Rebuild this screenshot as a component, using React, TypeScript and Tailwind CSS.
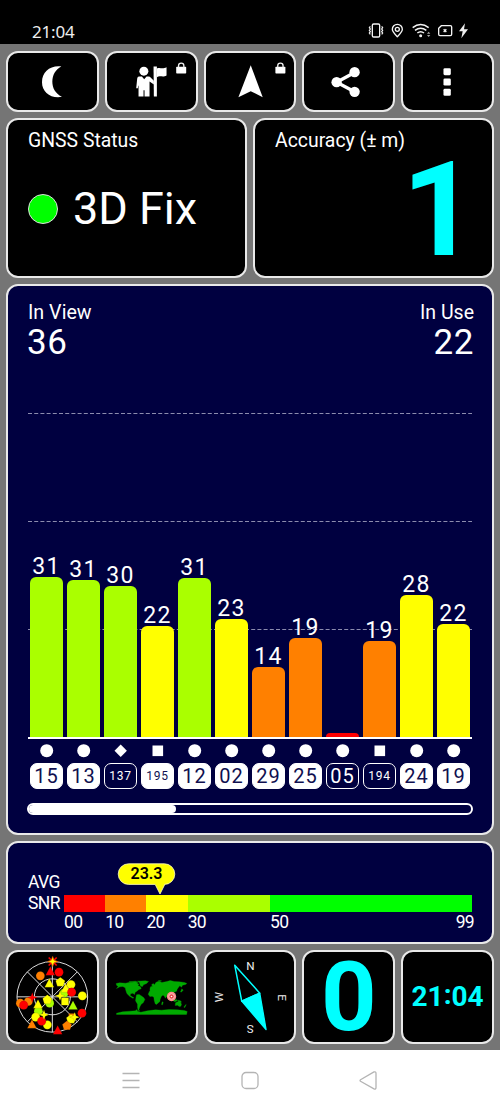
import type { ReactNode } from 'react';
import clsx from 'clsx';

type Sat = {
  id: string;
  snr?: number;
  h: number;
  color: string;
  shape: 'circle' | 'square' | 'diamond';
  used: boolean;
};

const LIME = 'bg-[#aaff00]';
const YELLOW = 'bg-[#ffff00]';
const ORANGE = 'bg-[#ff8000]';
const RED = 'bg-[#ff0000]';

const sats: Sat[] = [
  { id: '15', snr: 31, h: 160, color: LIME, shape: 'circle', used: true },
  { id: '13', snr: 31, h: 157, color: LIME, shape: 'circle', used: true },
  { id: '137', snr: 30, h: 151.5, color: LIME, shape: 'diamond', used: false },
  { id: '195', snr: 22, h: 111, color: YELLOW, shape: 'square', used: true },
  { id: '12', snr: 31, h: 159.5, color: LIME, shape: 'circle', used: true },
  { id: '02', snr: 23, h: 118.5, color: YELLOW, shape: 'circle', used: true },
  { id: '29', snr: 14, h: 70.5, color: ORANGE, shape: 'circle', used: true },
  { id: '25', snr: 19, h: 99, color: ORANGE, shape: 'circle', used: true },
  { id: '05', h: 4.5, color: RED, shape: 'circle', used: false },
  { id: '194', snr: 19, h: 96, color: ORANGE, shape: 'square', used: false },
  { id: '24', snr: 28, h: 142.5, color: YELLOW, shape: 'circle', used: true },
  { id: '19', snr: 22, h: 113, color: YELLOW, shape: 'circle', used: true },
];

const snrScale = [
  { label: '00', span: 10, color: RED },
  { label: '10', span: 10, color: ORANGE },
  { label: '20', span: 10, color: YELLOW },
  { label: '30', span: 20, color: LIME },
  { label: '50', span: 49, color: 'bg-[#00ff00]' },
];

function Card({ className, children }: { className?: string; children?: ReactNode }) {
  return (
    <div className={clsx('rounded-[12px] border-2 border-[#e9e9e9]', className)}>
      {children}
    </div>
  );
}

function Lock({ x }: { x: number }) {
  return (
    <g transform={`translate(${x} 186)`}>
      <rect x="0" y="13" width="30" height="20" rx="2" fill="#fff" />
      <path d="M7 14V10a8 8 0 0 1 16 0v5" fill="none" stroke="#eee" strokeWidth="4" />
    </g>
  );
}

function StatusBar() {
  return (
    <div className="h-11 bg-black flex items-start justify-between pl-8 pr-[31px]">
      <span className="mt-[20px] text-[17px] leading-6 text-[#eee] font-['Noto_Sans',sans-serif] tracking-[-0.2px]">21:04</span>
      <svg className="mt-[22px] w-[101px] h-[16.7px]" viewBox="354 66 303 50" fill="none" stroke="#f4f4f4" strokeWidth="4">
        <rect x="367" y="72" width="22" height="39" rx="4" />
        <path d="M361 79l-3 4 3 4-3 4 3 4-3 4 3 4M395 79l3 4-3 4 3 4-3 4 3 4-3 4" strokeWidth="3.5" />
        <path d="M442 110c-7-7-15-14-15-22a15 15 0 0 1 30 0c0 8-8 15-15 22z" />
        <circle cx="442" cy="88" r="6" />
        <path d="M488 83q24-19 48 0M495 91q17-13 34 0M502 99q10-8 20 0" strokeWidth="4.5" />
        <circle cx="512" cy="107" r="4.5" fill="#eee" stroke="none" />
        <path d="M531 101l5-6 5 6zM531 105l5 6 5-6z" fill="#aaa" stroke="none" />
        <path d="M574 77h27q4 0 4 4v22q0 4-4 4h-31q-4 0-4-4V85z" />
        <path d="M581 88l8 8M589 88l-8 8" strokeWidth="4" />
        <path d="M645 70l-18 24h11l-4 21 20-27h-12z" fill="#eee" stroke="none" />
      </svg>
    </div>
  );
}

function TopButtons() {
  return (
    <div className="grid grid-cols-5 gap-1.5 h-[61px] shrink-0">
      <Card className="bg-black">
        <svg className="w-full h-full" viewBox="24 157.5 266.4 171" fill="#fff">
          <path d="M184 198C150 194 126 215 126 245s26 50 60 44C165 278 157 262 157 243s9-35 27-45z" />
        </svg>
      </Card>
      <Card className="bg-black">
        <svg className="w-full h-full" viewBox="320.4 157.5 266.4 171" fill="#fff">
          <circle cx="431" cy="212" r="13.5" />
          <path d="M416 228h9l7 8 7-8h6q4 0 7 4l9 9v11l-13-9v45h-15v-19h-3v19h-15v-30l-1-4-1 9h-5l3-29q1-6 5-6z" />
          <path d="M460 198h10v90h-9z" />
          <path d="M470 204c9-5 16 3 29-4v25c-12 7-20-2-29 5z" />
          <Lock x={528} />
        </svg>
      </Card>
      <Card className="bg-black">
        <svg className="w-full h-full" viewBox="-133.2 157.5 266.4 171" fill="#fff">
          <path d="M1 194L37 290L1 272L-36 290z" />
          <Lock x={75} />
        </svg>
      </Card>
      <Card className="bg-black">
        <svg className="w-full h-full" viewBox="163.2 157.5 266.4 171" fill="#fff">
          <path d="M315 216L261 245L315 274" fill="none" stroke="#fff" strokeWidth="10" />
          <circle cx="315" cy="215" r="15.5" />
          <circle cx="261" cy="245" r="15.5" />
          <circle cx="315" cy="274" r="15.5" />
        </svg>
      </Card>
      <Card className="bg-black">
        <svg className="w-full h-full" viewBox="459.6 157.5 266.4 171" fill="#fff">
          <rect x="581" y="203" width="22" height="21" rx="4" />
          <rect x="581" y="234" width="22" height="21" rx="4" />
          <rect x="581" y="265" width="22" height="21" rx="4" />
        </svg>
      </Card>
    </div>
  );
}

function SatMark({ shape }: { shape: Sat['shape'] }) {
  return (
    <svg className="w-[14px] h-[14px]" viewBox="0 0 14 14" fill="#fff">
      {shape === 'circle' && <circle cx="6.7" cy="6.7" r="6.5" />}
      {shape === 'square' && <rect x="1.5" y="1.5" width="10.6" height="10.6" />}
      {shape === 'diamond' && <path d="M6.7 .5L12.9 6.7L6.7 12.9L.5 6.7z" />}
    </svg>
  );
}

function SignalCard() {
  return (
    <Card className="bg-[#000040] h-[551px] shrink-0 px-5 pt-[15px]">
      <div className="flex justify-between">
        <div>
          <div className="text-[19.7px] leading-6">In View</div>
          <div className="text-[35px] leading-9 tracking-[0.6px] -ml-px">36</div>
        </div>
        <div className="text-right">
          <div className="text-[19.5px] leading-6 -mr-0.5">In Use</div>
          <div className="text-[35px] leading-9 tracking-[0.6px] -mr-0.5">22</div>
        </div>
      </div>

      <div className="relative mt-4 h-[362px]">
        <svg className="absolute left-0 top-0 w-full h-full" stroke="#8c8cae" strokeWidth="1.2" strokeDasharray="4 2.2">
          <path d="M0 36.5H444M0 144.5H444M0 252.5H444" />
        </svg>
        <div className="relative h-full flex items-end border-b-2 border-white">
          {sats.map((s) => (
            <div key={s.id} className="flex-1 flex flex-col items-center">
              {s.snr !== undefined && (
                <span className="text-[23px] leading-[22px] tracking-[1.2px] relative top-px">{s.snr}</span>
              )}
              <div className={clsx('w-[33.4px] rounded-t-[6px]', s.color)} style={{ height: s.h }} />
            </div>
          ))}
        </div>
      </div>

      <div className="flex mt-[5px]">
        {sats.map((s) => (
          <div key={s.id} className="flex-1 flex flex-col items-center gap-[5px]">
            <SatMark shape={s.shape} />
            <div
              className={clsx(
                'w-[33.4px] h-[26px] rounded-[7px] flex items-center justify-center border-[1.5px] border-white',
                s.used ? 'bg-white text-[#101050]' : 'text-white',
                s.id.length > 2 ? 'text-[12px] tracking-[0.8px]' : 'text-[20px] tracking-[1px]',
              )}
            >
              {s.id}
            </div>
          </div>
        ))}
      </div>

      <div className="mt-[14px] -mx-px h-[12px] rounded-full border-2 border-white bg-white">
        <div className="h-full rounded-full bg-[#000040] overflow-hidden">
          <div className="h-full w-[147px] rounded-r-full bg-white" />
        </div>
      </div>
    </Card>
  );
}

function SnrCard() {
  return (
    <Card className="bg-[#000040] h-[102.5px] shrink-0 px-5 flex">
      <div className="w-9 shrink-0 pt-[28.5px] text-[17.5px] leading-[21px] tracking-[-0.6px]">
        <div>AVG</div>
        <div>SNR</div>
      </div>
      <div className="flex-1 relative pt-[51.5px] text-[17.5px] tracking-[-0.7px]">
        <svg className="absolute left-[53px] top-[20px] w-[60px] h-[32px]" viewBox="0 0 60 32">
          <path d="M11.5 .8H47.5a10.2 10.2 0 0 1 0 20.6H47.8L43 31L38.2 21.4H11.5a10.2 10.2 0 0 1 0-20.6z" fill="#ff0" stroke="#ffffc0" strokeWidth="0.8" />
          <text x="29.5" y="16.2" textAnchor="middle" className="text-[16px] font-semibold fill-black tracking-[0px]">23.3</text>
        </svg>
        <div className="flex h-[17.5px]">
          {snrScale.map((s) => (
            <div key={s.label} className={s.color} style={{ flex: s.span }} />
          ))}
        </div>
        <div className="relative flex leading-[21px]">
          {snrScale.map((s) => (
            <div key={s.label} style={{ flex: s.span }}>{s.label}</div>
          ))}
          <span className="absolute -right-0.5">99</span>
        </div>
      </div>
    </Card>
  );
}

const dots: [number, number, string][] = [
  [121, 91, '#ff8000'], [177, 80, '#f00'], [213, 117, '#ff0'], [247, 151, '#ff0'],
  [149, 173, '#af0'], [61, 173, '#ff8000'], [85, 168, '#ff8000'], [71, 179, '#f00'],
  [115, 197, '#af0'], [192, 143, '#af0'], [246, 203, '#f00'],
  [107, 215, '#ff0'], [142, 238, '#ff0'], [125, 227, '#f00'],
];
const triangles: [number, number, string][] = [
  [151, 77, '#f00'], [148, 113, '#ff0'], [114, 176, '#ff0'], [197, 128, '#ff0'],
  [219, 180, '#af0'], [96, 236, '#ff8000'], [173, 254, '#f00'],
];
const pentagons: [number, number, string][] = [
  [181, 109, '#ff0'], [142, 162, '#ff0'], [213, 220, '#ff0'], [201, 240, '#ff8000'],
];
const stars: [number, number, string][] = [
  [97, 156, '#f00'], [180, 151, '#ff0'], [132, 208, '#ff0'], [224, 215, '#ff0'],
];

function SkyView() {
  return (
    <svg className="w-full h-full" viewBox="24 19.5 266.4 270">
      <g fill="none" stroke="#ddd" strokeWidth="3">
        <circle cx="157" cy="154" r="106" />
        <circle cx="157" cy="154" r="54" />
        <path d="M51 154H263M157 48V260M82 79L232 229M82 229L232 79" />
      </g>
      <g stroke="#332200" strokeOpacity="0.4">
        {dots.map(([x, y, c]) => <circle key={`${x}-${y}`} cx={x} cy={y} r="13" fill={c} />)}
        <rect x="206" y="204" width="20" height="18" fill="#ff8000" />
        {triangles.map(([x, y, c]) => (
          <path key={`${x}-${y}`} d="M0-14L14 12H-14z" fill={c} transform={`translate(${x} ${y})`} />
        ))}
        <circle cx="215" cy="140" r="13" fill="#f00" />
        <rect x="184" y="157" width="22" height="22" fill="#ff0" />
        {pentagons.map(([x, y, c]) => (
          <path key={`${x}-${y}`} d="M0-14L14-3L9 13H-9L-14-3z" fill={c} transform={`translate(${x} ${y})`} />
        ))}
        {stars.map(([x, y, c]) => (
          <path key={`${x}-${y}`} d="M0-15L4-4L15 0L4 4L0 15L-4 4L-15 0L-4-4z" fill={c} transform={`translate(${x} ${y})`} />
        ))}
      </g>
      <path d="M146 36l24 24M170 36l-24 24" stroke="#f00" strokeWidth="5" />
      <path d="M158 33L162 44L173 48L162 52L158 63L154 52L143 48L154 44z" fill="#ff0" stroke="#f50" strokeWidth="2" />
    </svg>
  );
}

function WorldMap() {
  return (
    <svg className="w-full h-full" viewBox="320.4 19.5 266.4 270">
      <g fill="#0a0" stroke="#0a0" strokeWidth="1">
        <path d="M348 114l10-2 18 1 14-3 10 2 8-1 8 5-3 4 8 4 2 6-7 2-6 5-5 3-2 7-5-4-7 2-1 5 6 4 5 3-3 1-10-6-8-8-3-9-2-8-7-4-9 1-10 5 5-6-5-4z" />
        <path d="M386 109l20-2 8 3-10 3zM412 107l24-1 9 2-6 6-9 4-4 6-6-4-2-8z" />
        <path d="M409 148l8-1 8 5 6 5 3 5-5 10-6 4-4 8-3 8 2 4-4-2-2-8v-10l-6-10 1-8z" />
        <path d="M448 137l5-5 9 1 8 3 7 1 5 8 6 1-5 8-3 7-1 7-6 5-4 4-4-2-3-11-1-9-5-3-7 1-5-7z" />
        <path d="M449 131l2-7 6-2-3-4 5-4 4 4 4-7 8-4 10 4 15-3 10-3 12 3 15 1 16 2 7 3-4 3-9 2-3 6-5-4-4 4-4 6-2 6-7 3-2 6-6 1-3 10-6-9-4 1-5 9-5-8-6-1-5 6-6-5-2-5-5-2-4 2-5-5-5 4z" />
        <path d="M486 169l3 1-2 8-3-1zM516 157l7 7 5-3 3 5-7 3-7-5zM532 164l9 2 3 4-8-1zM526 172l8-4 6 1 4 7-2 6-5 1-5-4-7 1zM555 179l3-2-4 9-3-1zM475 105l9 1-6 2zM545 130l4 4-6 6-2-1z" />
        <path d="M349 203l18-4 22-2 17-1 4-4 2 5 10 3 20-4 24-3 18 1 22-2 26 1 20 2 9 3-2 9H349z" />
      </g>
      <circle cx="514" cy="153" r="14" fill="#ff8c8c" />
      <circle cx="514" cy="153" r="8" fill="#e94444" stroke="#ffd2d2" strokeWidth="2.5" />
      <circle cx="514" cy="153" r="2.5" fill="#fff" />
    </svg>
  );
}

function Compass() {
  return (
    <svg className="w-full h-full" viewBox="16.8 19.5 266.4 270">
      <path d="M103 59L178 143L124 167z" fill="none" stroke="#0ff" strokeWidth="4.5" strokeLinejoin="round" />
      <path d="M178 143L124 167L197 252z" fill="#0ff" stroke="#0ff" strokeWidth="4" strokeLinejoin="round" />
      <g className="text-[35px] fill-[#f0f0f0]" textAnchor="middle">
        <text transform="translate(150 72)">N</text>
        <text transform="translate(232 156) rotate(90)">E</text>
        <text transform="translate(150 238) rotate(180)">S</text>
        <text transform="translate(67 155) rotate(-90)">W</text>
      </g>
    </svg>
  );
}

export default function App() {
  return (
    <div className="w-[500px] h-[1111px] flex flex-col overflow-hidden bg-white text-white font-['Roboto',sans-serif]">
      <StatusBar />
      <main className="h-[1006px] bg-[#757575] px-1.5 pt-[6.5px] flex flex-col gap-1.5">
        <TopButtons />

        <div className="grid grid-cols-2 gap-1.5 h-[160.5px] shrink-0">
          <Card className="bg-black px-5 pt-[9px]">
            <div className="text-[19.4px] leading-6">GNSS Status</div>
            <div className="flex items-center gap-[15px] mt-[29px]">
              <div className="w-[30px] h-[30px] rounded-full bg-[#00ff00] border border-[#ddd]" />
              <span className="text-[45px] leading-[54px]">3D Fix</span>
            </div>
          </Card>
          <Card className="bg-black px-5 pt-[9px]">
            <div className="text-[19.4px] leading-6">Accuracy (± m)</div>
            <div className="text-right text-[131px] leading-[104px] mt-[5px] -mr-[5px] font-bold text-[#00ffff]">1</div>
          </Card>
        </div>

        <SignalCard />
        <SnrCard />

        <div className="grid grid-cols-5 gap-1.5 h-[94px] shrink-0">
          <Card className="bg-black"><SkyView /></Card>
          <Card className="bg-black"><WorldMap /></Card>
          <Card className="bg-black"><Compass /></Card>
          <Card className="bg-black flex items-center justify-center text-[#00ffff] font-bold text-[97px] leading-[90px]">0</Card>
          <Card className="bg-black flex items-center justify-center text-[#00ffff] font-bold text-[28px]">
            21<span className="relative -top-0.5">:</span>04
          </Card>
        </div>
      </main>

      <nav className="flex-1 flex items-center justify-center gap-[99px]">
        <svg className="w-5 h-5" viewBox="0 0 20 20" stroke="#b4b4b4" strokeWidth="1.3">
          <path d="M1.5 2.5H18.5M1.5 9.5H18.5M1.5 16.5H18.5" />
        </svg>
        <svg className="w-5 h-5" viewBox="0 0 20 20" fill="none" stroke="#b4b4b4" strokeWidth="1.3">
          <rect x="2" y="1.5" width="16" height="16" rx="4" />
        </svg>
        <svg className="w-5 h-5" viewBox="0 0 20 20" fill="none" stroke="#b4b4b4" strokeWidth="1.3" strokeLinejoin="round">
          <path d="M1.5 8.7L15 .9Q17 .5 17 2.5V16.5Q17 18.5 15 17.9L1.5 10.3Q.7 9.5 1.5 8.7z" />
        </svg>
      </nav>
    </div>
  );
}
